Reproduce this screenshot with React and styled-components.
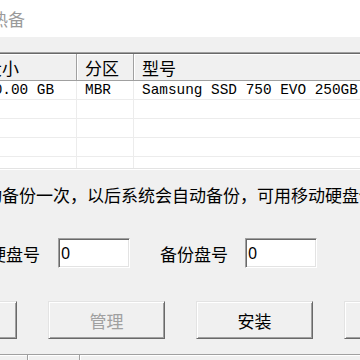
import React from 'react';
import styled, { createGlobalStyle } from 'styled-components';

const GlobalStyle = createGlobalStyle`
  html, body {
    margin: 0;
    padding: 0;
    background: #f0f0f0;
    overflow: hidden;
  }
  body {
    width: 360px;
    height: 360px;
    font-family: "Noto Sans CJK SC", "Noto Sans", sans-serif;
  }
`;

const Window = styled.div`
  width: 640px;
  margin-left: -112px;
  background: #f0f0f0;
`;

const TitleBar = styled.div`
  height: 37px;
  background: #fff;
  display: flex;
  align-items: center;
  padding-left: 69px;
  font-size: 17px;
  color: #9a9a9a;
`;

const Client = styled.div`
  padding: 15px 0 0 12px;
`;

const ListOuter = styled.div`
  border: 1px solid;
  border-color: #a0a0a0 #fff #fff #a0a0a0;
`;

const ListInner = styled.div`
  border: 1px solid;
  border-color: #696969 #e3e3e3 #e3e3e3 #696969;
  background: #fff;
`;

const columns = '75px 100px 57px 1fr';

const HeaderRow = styled.div`
  display: grid;
  grid-template-columns: ${columns};
  height: 27px;
`;

const HeaderCell = styled.div`
  display: flex;
  align-items: center;
  padding-left: 8px;
  background: #f0f0f0;
  font-size: 17px;
  color: #000;
  border-right: 1px solid #a0a0a0;
  border-bottom: 1px solid #a0a0a0;
  box-shadow: inset 1px 1px #fff;
`;

const Body = styled.div`
  height: 87px;
  overflow: hidden;
`;

const Row = styled.div`
  display: grid;
  grid-template-columns: ${columns};
  height: 19px;
`;

const Cell = styled.div`
  display: flex;
  align-items: center;
  padding-left: 8px;
  border-right: 1px solid #ececec;
  border-bottom: 1px solid #ececec;
  font-family: "Liberation Mono", monospace;
  font-size: 14.4px;
  color: #000;
  white-space: nowrap;
  overflow: hidden;
`;

const Note = styled.div`
  margin-top: 13px;
  line-height: 24px;
  font-size: 17px;
  color: #000;
  white-space: nowrap;
`;

const FieldRow = styled.div`
  margin-top: 31px;
  display: flex;
  align-items: center;
  height: 30px;
  padding-left: ${(p) => p.$indent}px;
`;

const Label = styled.span`
  font-size: 17px;
  color: #000;
  margin-left: ${(p) => p.$gap || 0}px;
  white-space: nowrap;
`;

const Input = styled.input`
  box-sizing: border-box;
  width: 72px;
  height: 30px;
  margin: 0 0 0 ${(p) => p.$gap}px;
  padding: 0 0 0 2px;
  border: 1px solid;
  border-color: #a0a0a0 #fff #fff #a0a0a0;
  box-shadow: inset 1px 1px #696969, inset -1px -1px #e3e3e3;
  background: #fff;
  font-family: "Noto Sans", sans-serif;
  font-size: 16px;
  color: #000;
  outline: none;
`;

const ButtonRow = styled.div`
  margin-top: 33px;
  display: flex;
  gap: 31px;
`;

const Button = styled.button`
  box-sizing: border-box;
  flex: none;
  width: 117px;
  height: 38px;
  padding: 0;
  background: #f0f0f0;
  border: 1px solid;
  border-color: #e3e3e3 #696969 #696969 #e3e3e3;
  box-shadow: inset 1px 1px #fff, inset -1px -1px #a0a0a0;
  font-family: "Noto Sans CJK SC", sans-serif;
  font-size: 17px;
  color: ${(p) => (p.disabled ? '#a0a0a0' : '#000')};
`;

const StatusBar = styled.div`
  margin-top: 15px;
  display: flex;
  height: 22px;
  border-top: 1px solid #a0a0a0;
`;

const StatusPanel = styled.div`
  width: ${(p) => p.$w}px;
  border-right: 1px solid #a0a0a0;
  box-shadow: inset 1px 1px #fff;
`;

const rows = [
  ['0', '50.00 GB', 'MBR', 'Samsung SSD 750 EVO 250GB'],
  ['', '', '', ''],
  ['', '', '', ''],
  ['', '', '', ''],
  ['', '', '', ''],
];

export default function App() {
  return (
    <>
      <GlobalStyle />
      <Window>
        <TitleBar>硬盘热备</TitleBar>
        <Client>
          <ListOuter>
            <ListInner>
              <HeaderRow>
                <HeaderCell>硬盘</HeaderCell>
                <HeaderCell>大小</HeaderCell>
                <HeaderCell>分区</HeaderCell>
                <HeaderCell>型号</HeaderCell>
              </HeaderRow>
              <Body>
                {rows.map((r, i) => (
                  <Row key={i}>
                    {r.map((c, j) => (
                      <Cell key={j}>{c}</Cell>
                    ))}
                  </Row>
                ))}
              </Body>
            </ListInner>
          </ListOuter>
          <Note>第一次请手动备份一次，以后系统会自动备份，可用移动硬盘做备份盘</Note>
          <FieldRow $indent={55}>
            <Label>系统硬盘号</Label>
            <Input $gap={18} defaultValue="0" />
            <Label $gap={30}>备份盘号</Label>
            <Input $gap={17} defaultValue="0" />
          </FieldRow>
          <ButtonRow>
            <Button>刷新</Button>
            <Button disabled>管理</Button>
            <Button>安装</Button>
            <Button>退出</Button>
          </ButtonRow>
          <StatusBar>
            <StatusPanel $w={127} />
            <StatusPanel $w={51} />
            <StatusPanel $w={300} />
          </StatusBar>
        </Client>
      </Window>
    </>
  );
}
